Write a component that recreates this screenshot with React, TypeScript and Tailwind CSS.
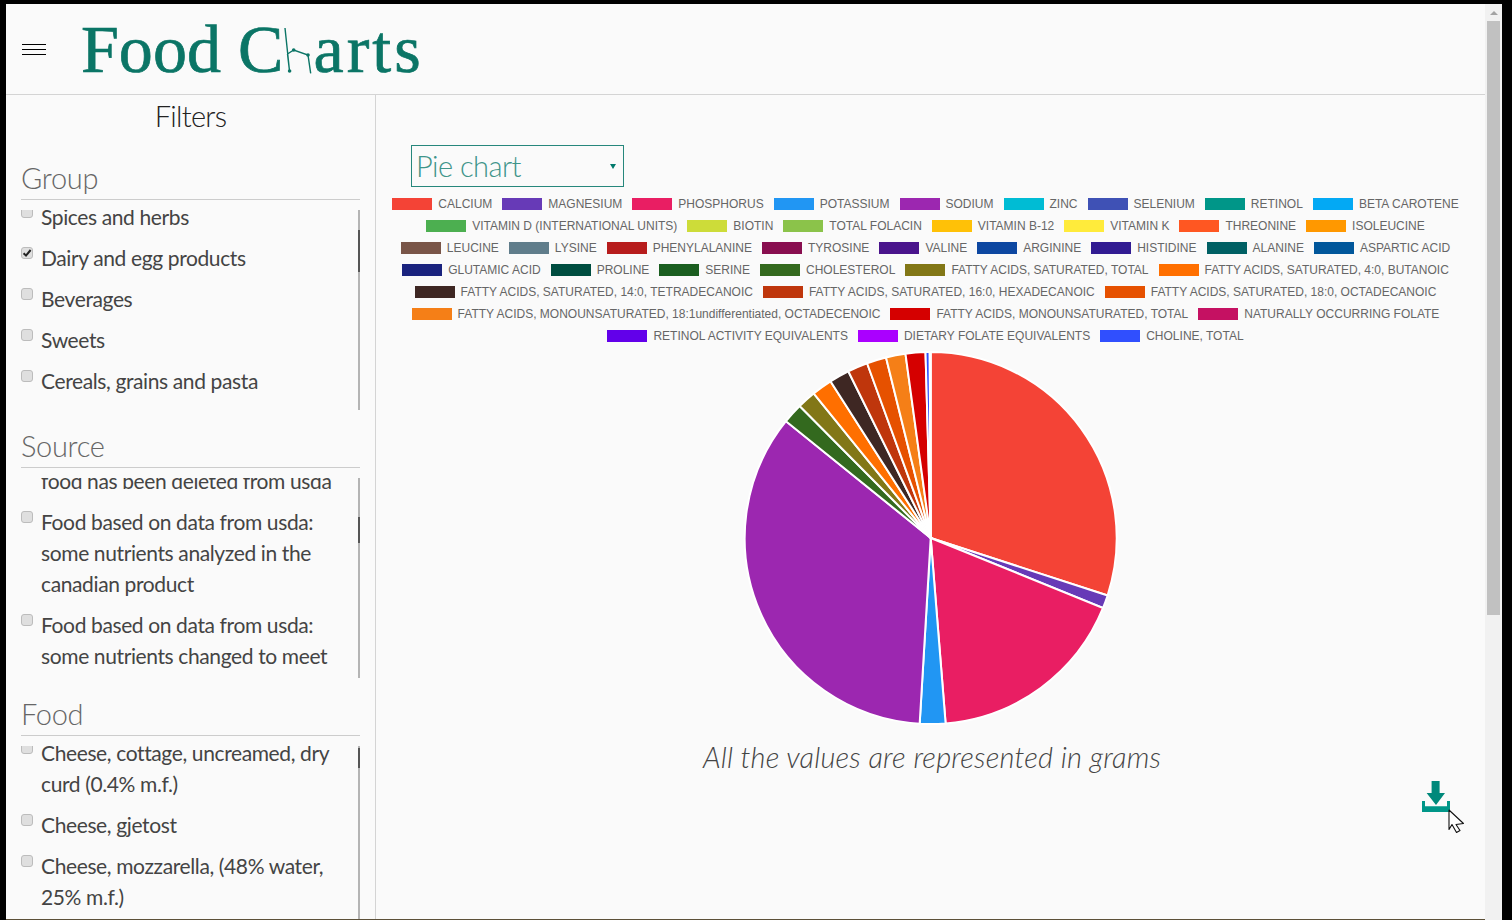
import React from "react";

const rows: [string, string][][] = [
  [["#f44336","CALCIUM"],["#673ab7","MAGNESIUM"],["#e91e63","PHOSPHORUS"],["#2196f3","POTASSIUM"],["#9c27b0","SODIUM"],["#00bcd4","ZINC"],["#3f51b5","SELENIUM"],["#009688","RETINOL"],["#03a9f4","BETA CAROTENE"]],
  [["#4caf50","VITAMIN D (INTERNATIONAL UNITS)"],["#cddc39","BIOTIN"],["#8bc34a","TOTAL FOLACIN"],["#ffc107","VITAMIN B-12"],["#ffeb3b","VITAMIN K"],["#ff5722","THREONINE"],["#ff9800","ISOLEUCINE"]],
  [["#795548","LEUCINE"],["#607d8b","LYSINE"],["#b71c1c","PHENYLALANINE"],["#880e4f","TYROSINE"],["#4a148c","VALINE"],["#0d47a1","ARGININE"],["#311b92","HISTIDINE"],["#006064","ALANINE"],["#01579b","ASPARTIC ACID"]],
  [["#1a237e","GLUTAMIC ACID"],["#004d40","PROLINE"],["#1b5e20","SERINE"],["#33691e","CHOLESTEROL"],["#827717","FATTY ACIDS, SATURATED, TOTAL"],["#ff6f00","FATTY ACIDS, SATURATED, 4:0, BUTANOIC"]],
  [["#3e2723","FATTY ACIDS, SATURATED, 14:0, TETRADECANOIC"],["#bf360c","FATTY ACIDS, SATURATED, 16:0, HEXADECANOIC"],["#e65100","FATTY ACIDS, SATURATED, 18:0, OCTADECANOIC"]],
  [["#f57f17","FATTY ACIDS, MONOUNSATURATED, 18:1undifferentiated, OCTADECENOIC"],["#d50000","FATTY ACIDS, MONOUNSATURATED, TOTAL"],["#c51162","NATURALLY OCCURRING FOLATE"]],
  [["#6200ea","RETINOL ACTIVITY EQUIVALENTS"],["#aa00ff","DIETARY FOLATE EQUIVALENTS"],["#304ffe","CHOLINE, TOTAL"]],
];

const slices: [number, string][] = [
  [108,"#f44336"],[112.1,"#673ab7"],[175.4,"#e91e63"],[183.4,"#2196f3"],[308.9,"#9c27b0"],
  [315.2,"#33691e"],[321,"#827717"],[327.4,"#ff6f00"],[333.7,"#3e2723"],[340,"#bf360c"],
  [346.1,"#e65100"],[352.2,"#f57f17"],[358.4,"#d50000"],[359.7,"#304ffe"],[360,"#f44336"],
];

function Pie() {
  const cx = 187.7, cy = 188, r = 186;
  const pt = (a: number) => {
    const t = (a * Math.PI) / 180;
    return `${cx + r * Math.sin(t)} ${cy - r * Math.cos(t)}`;
  };
  let prev = 0;
  return (
    <svg width="376" height="376" viewBox="0 0 376 376">
      {slices.map(([end, color], i) => {
        const d = `M${cx} ${cy}L${pt(prev)}A${r} ${r} 0 ${end - prev > 180 ? 1 : 0} 1 ${pt(end)}Z`;
        prev = end;
        return <path key={i} d={d} fill={color} stroke="#fff" strokeWidth="2" />;
      })}
    </svg>
  );
}

function Item({ label, checked }: { label: React.ReactNode; checked?: boolean }) {
  return (
    <label className="flex items-start gap-[8px]">
      <span className="relative mt-[5px] h-[12px] w-[12px] shrink-0">
        <input
          type="checkbox"
          defaultChecked={checked}
          className="block h-[12px] w-[12px] appearance-none rounded-[3px] border border-[#bcbcbc] bg-[#dfdfdf]"
        />
        {checked && (
          <svg width="12" height="12" viewBox="0 0 12 12" className="absolute top-0 left-0">
            <path d="M2.6 6.2L5 8.6L9.6 3" fill="none" stroke="#222" strokeWidth="2" />
          </svg>
        )}
      </span>
      <span className="block">{label}</span>
    </label>
  );
}

function Section({ title, offset, thumbTop, thumbH, children }: { title: string; offset: string; thumbTop: string; thumbH: string; children: React.ReactNode }) {
  return (
    <section className="mx-[15px] mb-[17px] w-[339px]">
      <h3 className="h-[41px] border-b border-[#ccc] text-[29px] leading-[37px] font-light tracking-[-0.3px] text-[#666]">{title}</h3>
      <div className="relative mt-[10px] h-[200px] overflow-hidden">
        <div className={`flex flex-col gap-[10px] pr-[20px] ${offset}`}>{children}</div>
        <div className="absolute top-0 right-0 h-full w-[2px] bg-[#b4b4b4]">
          <div className={`w-[2px] bg-[#555] ${thumbTop} ${thumbH}`} />
        </div>
      </div>
    </section>
  );
}

export default function App() {
  return (
    <div className="flex h-[920px] overflow-hidden bg-black pt-[4px] pr-[10px] pl-[6px] font-['Lato',sans-serif]">
      <div className="flex min-w-0 flex-1 flex-col border-b border-[#5c5038] bg-[#fafafa]">
        <header className="flex h-[91px] shrink-0 items-center border-b border-[#d4d4d4]">
          <div className="ml-[16px] flex w-[24px] flex-col gap-[4px]">
            <span className="h-px bg-black" />
            <span className="h-px bg-black" />
            <span className="h-px bg-black" />
          </div>
          <div className="ml-[35px] flex items-center font-['Liberation_Serif',serif] text-[68px] leading-[80px] text-[#0b7566] [-webkit-text-stroke:0.7px_#0b7566]">
            <span className="tracking-[0.05px]">Food C</span>
            <svg width="30" height="50" viewBox="0 0 30 50" className="shrink-0">
              <path d="M2 4L6.6 47.7M4.5 30L6.6 47.7M4.5 30L10.7 26L25 31L27.7 49.3" fill="none" stroke="#0b7566" strokeWidth="1.4" />
              <circle cx="6.6" cy="47" r="1.8" fill="#0b7566" />
              <circle cx="10.7" cy="26" r="1.8" fill="#0b7566" />
              <circle cx="25" cy="31" r="1.8" fill="#0b7566" />
            </svg>
            <span className="tracking-[3px]">arts</span>
          </div>
        </header>
        <div className="flex min-h-0 flex-1">
          <aside className="w-[370px] shrink-0 overflow-hidden border-r border-[#d4d4d4] text-[21px] leading-[31px] tracking-[-0.38px] text-[#444]">
            <h2 className="mt-[1px] mb-[23px] h-[40px] text-center text-[29px] leading-[40px] font-light tracking-[-0.7px] text-[#222]">Filters</h2>
            <Section title="Group" offset="-mt-[9px]" thumbTop="mt-[20px]" thumbH="h-[42px]">
              <Item label="Spices and herbs" />
              <Item label="Dairy and egg products" checked />
              <Item label="Beverages" />
              <Item label="Sweets" />
              <Item label="Cereals, grains and pasta" />
              <Item label="Fats and oils" />
            </Section>
            <Section title="Source" offset="-mt-[13px]" thumbTop="mt-[39px]" thumbH="h-[26px]">
              <div className="pl-[20px] whitespace-nowrap">food has been deleted from usda</div>
              <Item label="Food based on data from usda: some nutrients analyzed in the canadian product" />
              <Item label="Food based on data from usda: some nutrients changed to meet" />
            </Section>
            <Section title="Food" offset="-mt-[9px]" thumbTop="mt-[2px]" thumbH="h-[20px]">
              <Item label="Cheese, cottage, uncreamed, dry curd (0.4% m.f.)" />
              <Item label="Cheese, gjetost" />
              <Item label="Cheese, mozzarella, (48% water, 25% m.f.)" />
            </Section>
          </aside>
          <main className="flex min-w-0 flex-1 flex-col items-center overflow-hidden">
            <div className="mt-[50px] ml-[35px] flex h-[42px] w-[213px] items-center justify-between self-start border border-[#26877c] pr-[7px] pl-[4px] text-[29px] font-light tracking-[-0.55px] text-[#3f958a]">
              <span>Pie chart</span>
              <span className="h-0 w-0 border-x-[3px] border-t-[5px] border-x-transparent border-t-[#00796b]" />
            </div>
            <div className="mt-[6px] flex flex-col pr-[10px] font-['Liberation_Sans',sans-serif] text-[12px] text-[#666]">
              {rows.map((row, i) => (
                <div key={i} className="flex h-[22px] items-center justify-center gap-[10px] whitespace-nowrap">
                  {row.map(([color, name]) => (
                    <div key={name} className="flex items-center gap-[6px]">
                      <span className="h-[12px] w-[40px]" style={{ backgroundColor: color }} />
                      <span>{name}</span>
                    </div>
                  ))}
                </div>
              ))}
            </div>
            <div className="mt-[3px] shrink-0"><Pie /></div>
            <p className="mt-[11px] ml-[3px] text-[29px] leading-[40px] font-light tracking-[0.2px] text-[#444] italic">All the values are represented in grams</p>
            <div className="relative mt-[4px] mr-[35px] self-end">
              <svg width="28" height="31" viewBox="0 0 28 31" className="block">
                <path d="M9.6 0H17.6V12H23L14 24L4.6 12H9.6Z" fill="#00897b" />
                <path d="M0 20H3V25.3H25V20H28V31H0Z" fill="#009688" />
              </svg>
              <svg width="17" height="25" viewBox="0 0 17 25" className="absolute top-[28px] left-[26px]">
                <path d="M1 1L15.5 14.5L8 15.5L12 21.5L8.5 23.5L4 15.5L1 20.5Z" fill="#fff" stroke="#111" strokeWidth="1.1" strokeLinejoin="round" />
              </svg>
            </div>
          </main>
        </div>
      </div>
      <div className="flex w-[17px] shrink-0 flex-col items-center bg-[#f1f1f1]">
        <div className="flex h-[17px] items-center justify-center">
          <span className="h-0 w-0 border-x-[4px] border-b-[4px] border-x-transparent border-b-[#a3a3a3]" />
        </div>
        <div className="h-[594px] w-[13px] bg-[#c1c1c1]" />
      </div>
    </div>
  );
}
